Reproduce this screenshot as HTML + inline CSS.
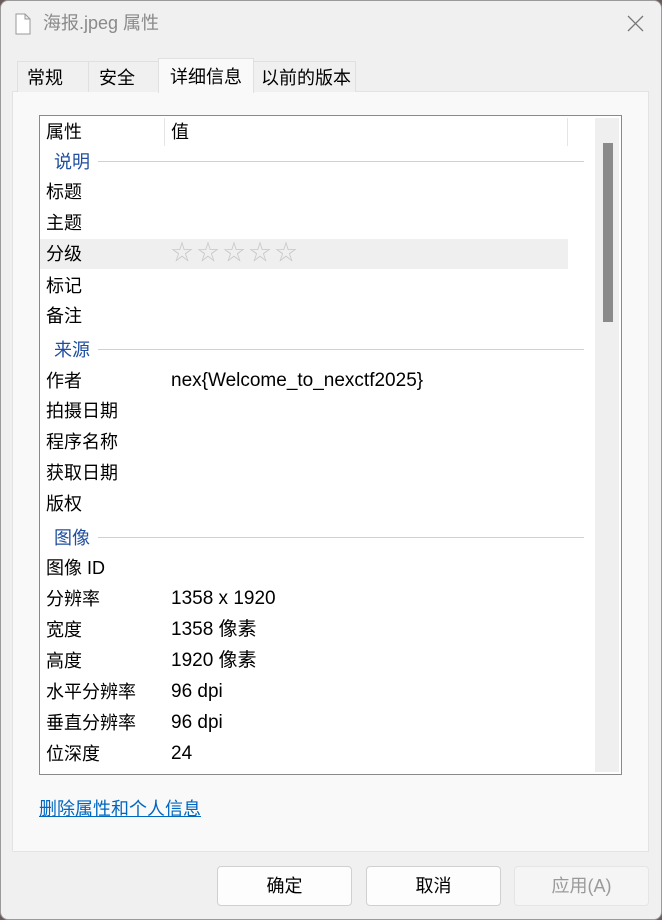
<!DOCTYPE html>
<html><head><meta charset="utf-8"><style>
*{margin:0;padding:0;box-sizing:border-box}
body{width:662px;height:920px;overflow:hidden;background:#6a5a5a;font-family:"Liberation Sans","Noto Sans CJK SC",sans-serif;position:relative}
.win{position:absolute;left:0;top:0;width:662px;height:920px;background:#f0f0f0;border-radius:8px;border:1px solid #9a9a9a;overflow:hidden}
.t{position:absolute;white-space:nowrap}
.title{left:42px;top:10px;font-size:18px;color:#8a8a8a;line-height:24px}
.tab{position:absolute;top:60px;height:31px;border:1px solid #e0e0e0;border-bottom:none;background:#f0f0f0;font-size:18px;line-height:32px;color:#000;white-space:nowrap}
.panel{position:absolute;left:11px;top:90px;width:637px;height:761px;background:#f9f9f9;border:1px solid #e3e3e3}
.list{position:absolute;left:38px;top:114px;width:583px;height:660px;background:#fff;border:1px solid #8a8a8a}
.r{position:absolute;font-size:18px;line-height:30px;color:#000;white-space:nowrap}
.v{font-size:19px}
.g{position:absolute;left:14px;font-size:18px;line-height:30px;color:#1f4ea0}
.gl{position:absolute;left:58px;width:486px;height:1px;background:#c5d2ee}
.btn{position:absolute;top:865px;width:135px;height:40px;border:1px solid #d0d0d0;border-radius:4px;background:#fdfdfd;font-size:18px;text-align:center;line-height:38px}
</style></head><body>
<div class="win">
<svg style="position:absolute;left:14px;top:12px" width="16" height="22" viewBox="0 0 16 22"><path d="M1 1h9l5 5v15H1z M10 1v5h5" fill="#fff" stroke="#999" stroke-width="1"/></svg>
<div class="t title">海报.jpeg 属性</div>
<svg style="position:absolute;left:626px;top:14px" width="17" height="17" viewBox="0 0 17 17"><path d="M1 1L16 16M16 1L1 16" stroke="#777" stroke-width="1.3"/></svg>
<div class="panel"></div>
<div class="tab" style="left:16px;width:72px;padding-left:9px">常规</div>
<div class="tab" style="left:87px;width:71px;padding-left:10px">安全</div>
<div class="tab" style="left:157px;top:57px;height:35px;width:96px;background:#f9f9f9;padding-left:11px;line-height:36px">详细信息</div>
<div class="tab" style="left:252px;width:103px;padding-left:7px">以前的版本</div>
<div class="list">
 <div style="position:absolute;left:124px;top:2px;width:1px;height:28px;background:#e5e5e5"></div>
 <div style="position:absolute;left:527px;top:2px;width:1px;height:28px;background:#e5e5e5"></div>
 <div style="position:absolute;left:555px;top:2px;width:24px;height:654px;background:#efefef"></div>
 <div style="position:absolute;left:563px;top:27px;width:10px;height:179px;background:#8a8a8a"></div>
 <div style="position:absolute;left:0;top:123px;width:528px;height:30px;background:#efefef"></div>
 <div class="r" style="left:6px;top:1px">属性</div><div class="r" style="left:131px;top:1px">值</div>
 <div class="g" style="top:31px">说明</div><div class="gl" style="top:45px"></div>
 <div class="r" style="left:6px;top:61px">标题</div>
 <div class="r" style="left:6px;top:92px">主题</div>
 <div class="r" style="left:6px;top:123px">分级</div>
 <div class="r" style="left:131px;top:122px;color:#c8c8c8;font-size:22px;letter-spacing:4px">☆☆☆☆☆</div>
 <div class="r" style="left:6px;top:155px">标记</div>
 <div class="r" style="left:6px;top:185px">备注</div>
 <div class="g" style="top:219px">来源</div><div class="gl" style="top:233px"></div>
 <div class="r" style="left:6px;top:250px">作者</div><div class="r v" style="left:131px;top:250px">nex{Welcome_to_nexctf2025}</div>
 <div class="r" style="left:6px;top:280px">拍摄日期</div>
 <div class="r" style="left:6px;top:311px">程序名称</div>
 <div class="r" style="left:6px;top:342px">获取日期</div>
 <div class="r" style="left:6px;top:373px">版权</div>
 <div class="g" style="top:407px">图像</div><div class="gl" style="top:421px"></div>
 <div class="r" style="left:6px;top:437px">图像 ID</div>
 <div class="r" style="left:6px;top:468px">分辨率</div><div class="r v" style="left:131px;top:468px">1358 x 1920</div>
 <div class="r" style="left:6px;top:499px">宽度</div><div class="r v" style="left:131px;top:499px">1358 像素</div>
 <div class="r" style="left:6px;top:530px">高度</div><div class="r v" style="left:131px;top:530px">1920 像素</div>
 <div class="r" style="left:6px;top:561px">水平分辨率</div><div class="r v" style="left:131px;top:561px">96 dpi</div>
 <div class="r" style="left:6px;top:592px">垂直分辨率</div><div class="r v" style="left:131px;top:592px">96 dpi</div>
 <div class="r" style="left:6px;top:623px">位深度</div><div class="r v" style="left:131px;top:623px">24</div>
</div>
<div class="t" style="left:38px;top:796px;font-size:18px;line-height:24px;color:#0067c0;text-decoration:underline">删除属性和个人信息</div>
<div class="btn" style="left:216px">确定</div>
<div class="btn" style="left:365px">取消</div>
<div class="btn" style="left:513px;background:#f5f5f5;border-color:#e5e5e5;color:#9a9a9a">应用(A)</div>
</div>
</body></html>
